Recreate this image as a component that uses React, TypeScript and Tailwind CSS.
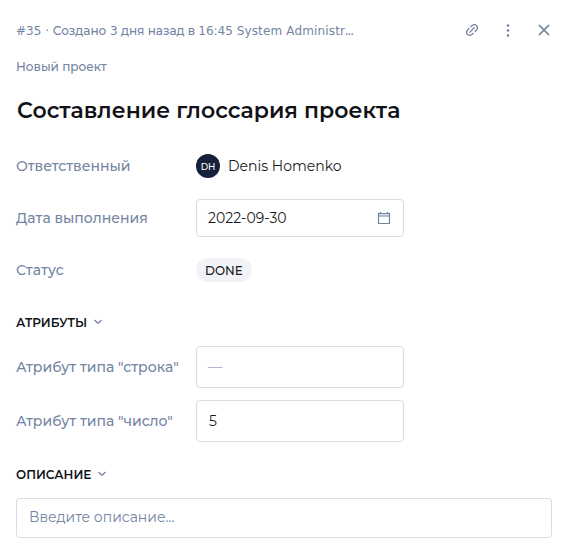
import type { ReactNode } from "react";

function Chevron() {
  return (
    <svg className="-mt-0.5" width="10" height="10" viewBox="0 0 10 10" fill="none" stroke="#7c8aa8" strokeWidth="1.4">
      <path d="M1.5 3 5 6.2 8.5 3" />
    </svg>
  );
}

function Row({ label, className, children }: { label: string; className: string; children: ReactNode }) {
  return (
    <div className={`flex items-center ${className}`}>
      <div className="w-[180px] shrink-0 whitespace-nowrap text-[14px] font-medium leading-5 text-[#7484a3]">{label}</div>
      {children}
    </div>
  );
}

function Section({ title, className }: { title: string; className: string }) {
  return (
    <div className={`flex h-4 items-center gap-1.5 text-[12px] font-semibold leading-4 text-[#111217] ${className}`}>
      <span>{title}</span>
      <Chevron />
    </div>
  );
}

function Latin({ children }: { children: ReactNode }) {
  return <span className="font-['DejaVu_Sans',sans-serif]">{children}</span>;
}

export default function App() {
  return (
    <div className="h-[541px] w-[571px] overflow-hidden bg-white px-4 pt-[18px] font-['Montserrat','DejaVu_Sans',sans-serif] text-[14px] text-[#181a20]">
      <header className="flex h-6 items-center justify-between">
        <div className="whitespace-pre pt-0.5 text-[12px] font-medium leading-4 text-[#7484a3]">
          <Latin>{"#35 · "}</Latin>Создано<Latin>{" 3"}</Latin> дня назад в <Latin>16:45 <span className="tracking-[0.15px]">System Administr</span></Latin>…
        </div>
        <div className="flex items-center gap-5 pr-[3px] text-[#6b7a99]">
          <svg width="16" height="16" viewBox="0 0 16 16" fill="none" stroke="currentColor" strokeWidth="1.2" strokeLinecap="round">
            <path d="m5.7 10.3 4.6-4.6M6.7 4.7 8.6 3.2a3.1 3.1 0 0 1 4.3 4.3l-1.7 2M9.3 11.3l-1.9 1.5a3.1 3.1 0 0 1-4.3-4.3l1.7-2" />
          </svg>
          <svg width="16" height="16" viewBox="0 0 16 16" fill="currentColor">
            <circle cx="8" cy="3.5" r="1.2" />
            <circle cx="8" cy="8.5" r="1.2" />
            <circle cx="8" cy="13.5" r="1.2" />
          </svg>
          <svg width="16" height="16" viewBox="0 0 16 16" fill="none" stroke="currentColor" strokeWidth="1.6">
            <path d="m3 3 10 10M13 3 3 13" />
          </svg>
        </div>
      </header>
      <div className="mt-[17px] text-[12px] font-medium leading-4 text-[#7484a3]">Новый проект</div>
      <h1 className="mt-5 whitespace-nowrap pl-px text-[22px] font-semibold leading-8 text-[#111217]">Составление глоссария проекта</h1>

      <Row label="Ответственный" className="mt-[27px] h-6">
        <div className="flex size-6 items-center justify-center rounded-full bg-[#15203b] pt-px text-[9px] font-medium text-white">DH</div>
        <span className="ml-2 leading-5">Denis Homenko</span>
      </Row>
      <Row label="Дата выполнения" className="mt-[21px] h-[38px]">
        <div className="flex h-[38px] w-[208px] items-center justify-between rounded border border-[#dadbe6] pl-[11px] pr-3">
          <span>2022-09-30</span>
          <svg width="14" height="14" viewBox="0 0 14 14" fill="none" stroke="#74839f">
            <path d="M2 3.5h10" stroke="#d9deea" strokeWidth="2" />
            <path d="M1.5 2.5h11v10h-11zM1.5 5h11M3.5 1v2M10.5 1v2" strokeWidth="1.2" />
          </svg>
        </div>
      </Row>
      <Row label="Статус" className="mt-[21px] h-6">
        <div className="flex h-6 w-14 items-center justify-center rounded-full bg-[#f2f3f8] pt-0.5 text-[12px] font-medium">DONE</div>
      </Row>

      <Section title="АТРИБУТЫ" className="mt-[33px]" />
      <Row label={'Атрибут типа "строка"'} className="mt-[15px] h-[42px]">
        <div className="flex h-[42px] w-[208px] items-center rounded border border-[#dadbe6] px-[11px] text-[#adb6cb]">—</div>
      </Row>
      <Row label={'Атрибут типа "число"'} className="mt-3 h-[42px]">
        <div className="flex h-[42px] w-[208px] items-center rounded border border-[#dadbe6] px-3">5</div>
      </Row>

      <Section title="ОПИСАНИЕ" className="mt-[25px]" />
      <div className="mt-[15px] flex h-10 w-[536px] items-center rounded border border-[#dadbe6] px-3 pb-0.5 text-[14px] text-[#7484a3]">Введите описание...</div>
    </div>
  );
}
